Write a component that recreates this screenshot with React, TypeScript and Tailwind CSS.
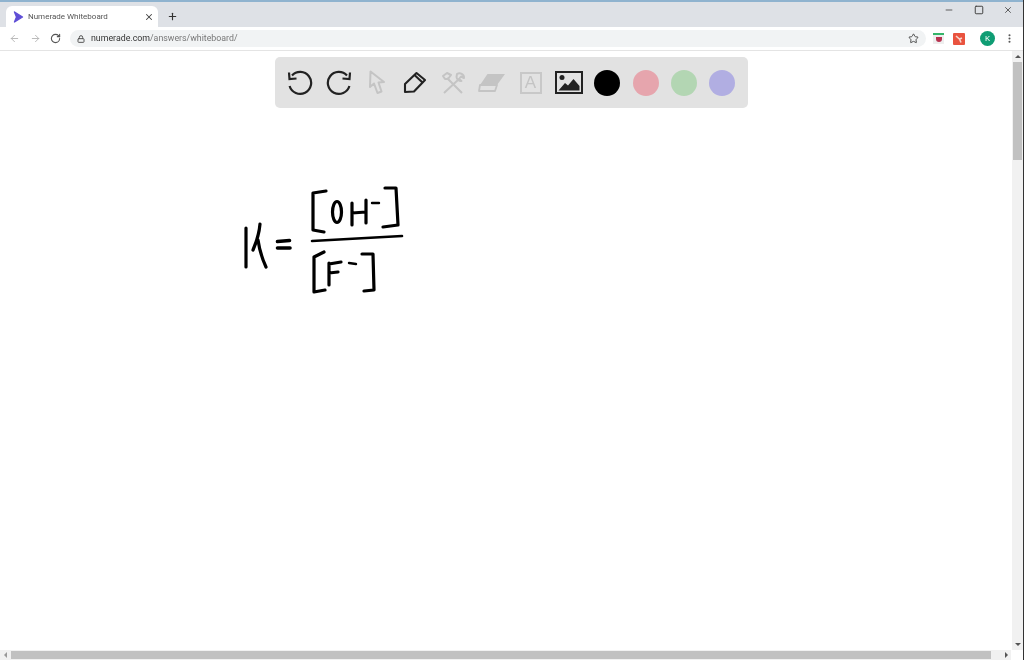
import { ArrowLeft, ArrowRight, RotateCw, Lock, Star, Plus, X, Minus, Square, MoreVertical } from "lucide-react";

const font = { fontFamily: "Roboto, 'Liberation Sans', sans-serif" };

const UndoIcon = ({ flip = false }: { flip?: boolean }) => (
  <svg width="26" height="26" viewBox="0 0 26 26" fill="none" stroke="#222" strokeWidth="2.2" className={flip ? "-scale-x-100" : ""}>
    <path d="M5 5.5 A11 11 0 1 1 2.6 16" />
    <path d="M2 2.5 L2.5 9 L9.5 8.5" />
  </svg>
);

const PointerIcon = () => (
  <svg width="18" height="25" viewBox="0 0 18 25" fill="none" stroke="#c4c4c4" strokeWidth="2" strokeLinejoin="round">
    <path d="M2.5 1.5 L2 17 L6 13.5 L9.5 23 L13.5 21.5 L10.5 12.5 L16 12 Z" />
  </svg>
);

const PencilIcon = () => (
  <svg width="24" height="23" viewBox="0 0 24 23" fill="none" stroke="#222" strokeWidth="2.1" strokeLinejoin="round">
    <path d="M2 13 L13.5 2 L22 9 L11 20.5 L2 21 Z" />
    <path d="M11.5 4 L19.5 11.5" />
  </svg>
);

const ToolsIcon = () => (
  <svg width="25" height="24" viewBox="0 0 25 24" fill="none" stroke="#c4c4c4" strokeWidth="2" strokeLinejoin="round">
    <path d="M6 7 L21 22 M18 8 L3 22" />
    <path d="M2 5 L6 2 L10 4 L7 8 L4 8 Z" />
    <path d="M16 3 A4.5 4.5 0 0 1 23 7 L20 5.5 L18 8 L20.5 10 A4.5 4.5 0 0 1 15.5 6 Z" />
  </svg>
);

const EraserIcon = () => (
  <svg width="28" height="20" viewBox="0 0 28 20" fill="none">
    <path d="M9.5 1 L27 1 L19 12 L2 12 Z" fill="#c4c4c4" />
    <path d="M2 12 L19 12 L17 18 L1 18 Z" stroke="#c4c4c4" strokeWidth="1.8" strokeLinejoin="round" />
  </svg>
);

const ImageIcon = () => (
  <svg width="28" height="23" viewBox="0 0 28 23" fill="none">
    <rect x="1" y="1" width="26" height="21" stroke="#222" strokeWidth="2" />
    <circle cx="7" cy="6.5" r="2.5" fill="#222" />
    <path d="M3.5 19.5 L10 12 L13 14.5 L18.5 8 L24.5 15 L24.5 19.5 Z" fill="#222" />
  </svg>
);

// one slot of the drawing toolbar
const Cell = ({ children }: { children: React.ReactNode }) => (
  <div className="w-[38.4px] h-full flex items-center justify-center shrink-0">{children}</div>
);

const Dot = ({ className }: { className: string }) => (
  <Cell>
    <div className={`w-[26px] h-[26px] rounded-full ${className}`} />
  </Cell>
);

const App = () => {
  return (
    <div className="w-[1024px] h-[660px] flex flex-col overflow-hidden bg-white border-r border-[#333] blur-[0.3px]" style={font}>
      {/* Title bar */}
      <div className="h-[27px] shrink-0 bg-[#dee1e6] border-t-2 border-[#8fb3cf] flex items-end pl-[6px]">
        <div className="w-[152px] h-[21px] bg-white rounded-t-md flex items-center pl-[7px] pr-[4px]">
          <svg width="11" height="12" viewBox="0 0 11 12" className="shrink-0">
            <path d="M1.5 1 L9.5 6 L1.5 11 L3.5 6 Z" fill="#5f4fd6" stroke="#5f4fd6" strokeWidth="1.4" strokeLinejoin="round" />
          </svg>
          <span className="ml-[4px] text-[8px] leading-none text-[#555] whitespace-nowrap">Numerade Whiteboard</span>
          <X size={10} strokeWidth={2.5} className="ml-auto text-[#444]" />
        </div>
        <div className="h-[21px] ml-[9px] flex items-center">
          <Plus size={11} strokeWidth={2.5} className="text-[#333]" />
        </div>
        <div className="ml-auto h-full flex items-start pt-[3px] text-[#444]">
          <div className="w-[30px] flex justify-center"><Minus size={10} strokeWidth={2} /></div>
          <div className="w-[29px] flex justify-center"><Square size={10} strokeWidth={2.4} /></div>
          <div className="w-[30px] flex justify-center"><X size={10} strokeWidth={2} /></div>
        </div>
      </div>

      {/* Address bar */}
      <div className="h-[24px] shrink-0 bg-white border-b border-[#e4e4e4] flex items-center">
        <div className="w-[70px] pl-[9px] flex items-center gap-[9.5px] shrink-0">
          <ArrowLeft size={11} className="text-[#b5b5b5]" />
          <ArrowRight size={11} className="text-[#b5b5b5]" />
          <RotateCw size={11} strokeWidth={2.4} className="text-[#555]" />
        </div>
        <div className="w-[856px] h-[17px] bg-[#f1f3f4] rounded-full flex items-center pl-[7px] pr-[7px] shrink-0">
          <Lock size={8} strokeWidth={3} className="text-[#555]" />
          <span className="ml-[6px] text-[8.8px] leading-none whitespace-nowrap">
            <span className="text-[#333]">numerade.com</span>
            <span className="text-[#777]">/answers/whiteboard/</span>
          </span>
          <Star size={11} strokeWidth={2} className="ml-auto text-[#444]" />
        </div>
        <div className="flex items-center pl-[7px] gap-[9px]">
          <div className="w-[11px] h-[11px] border-t-2 border-[#35b56a] bg-[#eee] flex items-center justify-center">
            <div className="w-[6px] h-[5px] bg-[#b8324f] rounded-b-sm" />
          </div>
          <svg width="12" height="12" viewBox="0 0 12 12">
            <rect width="12" height="12" rx="1" fill="#e9533f" />
            <path d="M3 3 L6.5 6 L9 5 M6.5 6 L8 9.5" stroke="#f8d5cd" strokeWidth="1.6" fill="none" />
          </svg>
        </div>
        <div className="ml-[15px] w-[15px] h-[15px] rounded-full bg-[#0f9d74] flex items-center justify-center text-white text-[8px] leading-none">K</div>
        <MoreVertical size={11} strokeWidth={2.5} className="ml-[9px] text-[#555]" />
      </div>

      {/* Page */}
      <div className="flex-1 min-h-0 flex">
        <div className="flex-1 relative pt-[6px] pl-[275px]">
          <div className="w-[473px] h-[51px] bg-[#e2e2e2] rounded-[5px] px-[6px] flex items-center">
            <Cell><UndoIcon /></Cell>
            <Cell><UndoIcon flip /></Cell>
            <Cell><PointerIcon /></Cell>
            <Cell><PencilIcon /></Cell>
            <Cell><ToolsIcon /></Cell>
            <Cell><EraserIcon /></Cell>
            <Cell>
              <div className="w-[22px] h-[22px] border-2 border-[#c8c8c8] flex items-center justify-center text-[#c4c4c4] text-[17px] leading-none" style={{ fontFamily: "'Liberation Sans', sans-serif" }}>A</div>
            </Cell>
            <Cell><ImageIcon /></Cell>
            <Dot className="bg-black" />
            <Dot className="bg-[#e6a5ad]" />
            <Dot className="bg-[#b3d6b3]" />
            <Dot className="bg-[#b1aee2]" />
          </div>

          {/* Handwriting on the whiteboard */}
          <svg width="180" height="125" viewBox="235 175 180 125" fill="none" stroke="#000" strokeWidth="3.2" strokeLinecap="round" strokeLinejoin="round" className="absolute left-[235px] top-[124px]">
            <path d="M246 228 L246 267" />
            <path d="M260 224 Q259 236 253 250" />
            <path d="M258 240 Q260 254 266 267" />
            <path d="M277.5 241.5 L289.5 240.5 M277.5 248 L290 248" strokeWidth="3.6" />
            <path d="M326 191 L313 193 L313 230 L324 232" />
            <ellipse cx="337" cy="212" rx="4.5" ry="10.5" />
            <path d="M352 203 L352 225 M366 200 L366 223 M352 213 L366 212" />
            <path d="M372 203 L379 203" strokeWidth="2.4" />
            <path d="M385 188 L396 188 L398 225 L383 227" />
            <path d="M312 241 L402 236" strokeWidth="2.6" />
            <path d="M324 252 L314 257 L314 292 L325 290" />
            <path d="M329 263 L329 285 M329 264 L341 262 M329 273 L338 272" />
            <path d="M349 263 L356 264" strokeWidth="2.4" />
            <path d="M362 254 L373 254 L374 290 L364 291" />
          </svg>
        </div>

        {/* Vertical scrollbar */}
        <div className="w-[11px] shrink-0 bg-[#f1f1f1] flex flex-col items-center">
          <div className="h-[11px] flex items-center justify-center">
            <div className="border-x-[3px] border-b-[3px] border-x-transparent border-b-[#555]" />
          </div>
          <div className="w-[9px] h-[98px] bg-[#c1c1c1]" />
          <div className="mt-auto h-[11px] flex items-center justify-center">
            <div className="border-x-[3px] border-t-[3px] border-x-transparent border-t-[#555]" />
          </div>
        </div>
      </div>

      {/* Horizontal scrollbar */}
      <div className="h-[10px] shrink-0 bg-[#f1f1f1] flex items-center">
        <div className="w-[11px] flex justify-center">
          <div className="border-y-[3px] border-r-[3px] border-y-transparent border-r-[#999]" />
        </div>
        <div className="w-[980px] h-[8px] bg-[#c1c1c1]" />
        <div className="ml-[11px] w-[9px] flex justify-center">
          <div className="border-y-[3px] border-l-[3px] border-y-transparent border-l-[#555]" />
        </div>
        <div className="flex-1 h-full bg-white" />
      </div>
    </div>
  );
};

export default App;
